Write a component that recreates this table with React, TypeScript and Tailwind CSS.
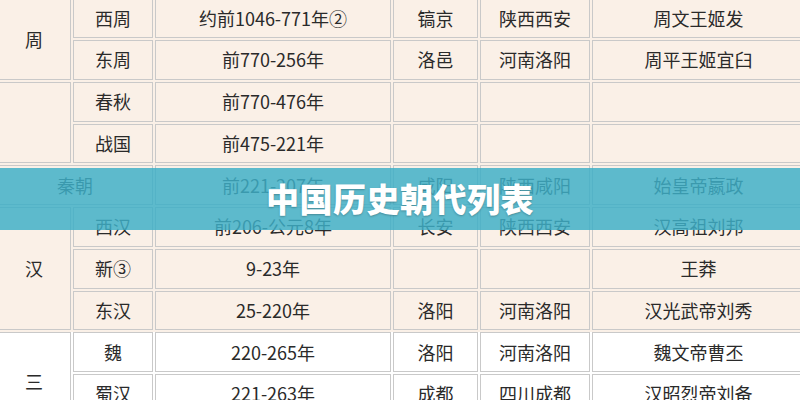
type Cell = {
  text?: string;
  col?: string;
  row?: string;
  multiline?: boolean;
};

const CREAM: Cell[] = [
  { text: "周", row: "row-span-2" },
  { text: "西周" },
  { text: "约前1046-771年②" },
  { text: "镐京" },
  { text: "陕西西安" },
  { text: "周文王姬发" },
  { text: "东周" },
  { text: "前770-256年" },
  { text: "洛邑" },
  { text: "河南洛阳" },
  { text: "周平王姬宜臼" },
  { text: "", row: "row-span-2" },
  { text: "春秋" },
  { text: "前770-476年" },
  {},
  {},
  {},
  { text: "战国" },
  { text: "前475-221年" },
  {},
  {},
  {},
  { text: "秦朝", col: "col-span-2" },
  { text: "前221-207年" },
  { text: "咸阳" },
  { text: "陕西咸阳" },
  { text: "始皇帝嬴政" },
  { text: "汉", row: "row-span-3" },
  { text: "西汉" },
  { text: "前206-公元8年" },
  { text: "长安" },
  { text: "陕西西安" },
  { text: "汉高祖刘邦" },
  { text: "新③" },
  { text: "9-23年" },
  {},
  {},
  { text: "王莽" },
  { text: "东汉" },
  { text: "25-220年" },
  { text: "洛阳" },
  { text: "河南洛阳" },
  { text: "汉光武帝刘秀" },
];

const WHITE: Cell[] = [
  { text: "三\n国", row: "row-span-3", multiline: true },
  { text: "魏" },
  { text: "220-265年" },
  { text: "洛阳" },
  { text: "河南洛阳" },
  { text: "魏文帝曹丕" },
  { text: "蜀汉" },
  { text: "221-263年" },
  { text: "成都" },
  { text: "四川成都" },
  { text: "汉昭烈帝刘备" },
  { text: "吴" },
  { text: "222-280年" },
  { text: "建业" },
  { text: "江苏南京" },
  { text: "吴大帝孙权" },
];

function Grid({ cells, bg, rows }: { cells: Cell[]; bg: string; rows: string }) {
  return (
    <div
      className={`grid grid-cols-[74px_80px_236px_85px_110px_213px] gap-[2px] ${rows} ${bg}`}
    >
      {cells.map((c, i) => (
        <div
          key={i}
          className={`flex items-center justify-center border border-[#c9c9c9] text-center ${c.col ?? ""} ${c.row ?? ""} ${c.multiline ? "whitespace-pre-line leading-[26px]" : ""}`}
        >
          {c.text}
        </div>
      ))}
    </div>
  );
}

export default function App() {
  return (
    <div className="relative w-[800px] h-[400px] overflow-hidden bg-white">
      <div
        className="-mt-[1.75px] -ml-[3px] w-[812px] text-[18px] text-[#2a2a2a] flex flex-col gap-[2px] bg-[#faf0e7]"
        style={{ fontFamily: '"Noto Sans CJK SC", "Noto Sans", sans-serif' }}
      >
        <Grid cells={CREAM} bg="bg-[#faf0e7]" rows="grid-rows-[repeat(8,39.75px)]" />
        <Grid cells={WHITE} bg="bg-white" rows="grid-rows-[repeat(3,39.75px)]" />
      </div>

      {/* title band */}
      <div className="absolute left-0 right-0 top-[168px] h-[62px] bg-[rgba(62,175,199,0.84)] flex items-center justify-center">
        <span
          className="text-white font-black text-[33px] tracking-[0.5px] [text-shadow:0_1px_2px_rgba(0,0,0,0.25)]"
          style={{ fontFamily: '"Noto Sans CJK SC", "Noto Sans", sans-serif' }}
        >
          中国历史朝代列表
        </span>
      </div>
    </div>
  );
}
